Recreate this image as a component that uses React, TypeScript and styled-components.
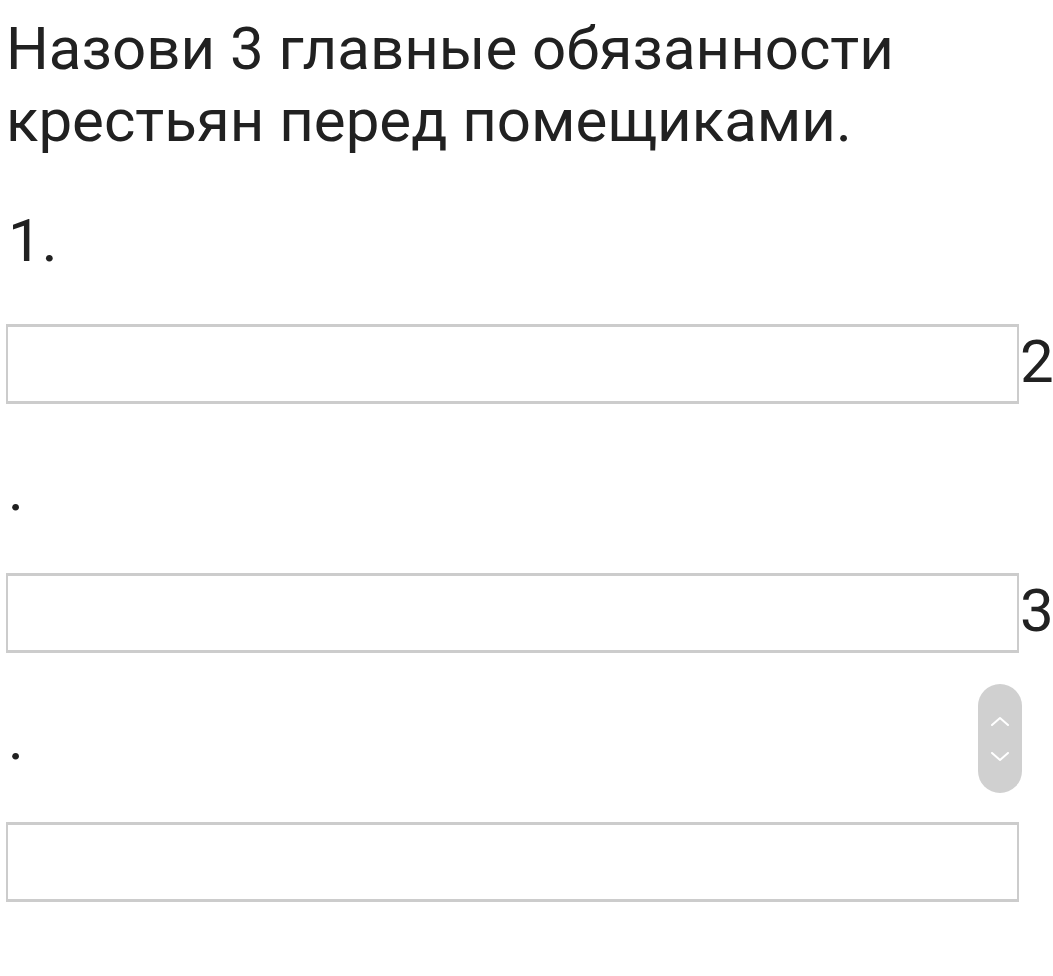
import styled, { createGlobalStyle } from 'styled-components';

const GlobalStyle = createGlobalStyle`
  html, body {
    margin: 0;
    padding: 0;
    background: #ffffff;
  }
  body {
    font-family: Roboto, "Noto Sans", "Liberation Sans", sans-serif;
    color: #212121;
  }
`;

const items = ['1.', '2', '3'];

const App = () => {
  return (
    <Page>
      <GlobalStyle />
      <Question>
        Назови 3 главные обязанности
        <br />
        крестьян перед помещиками.
      </Question>
      {items.map((num, i) => (
        <Item key={num}>
          <Label>{i === 0 ? '1.' : '.'}</Label>
          <AnswerRow>
            <AnswerInput type="text" />
            {i < items.length - 1 && <NextNumber>{items[i + 1]}</NextNumber>}
          </AnswerRow>
        </Item>
      ))}
      <ScrollButtons>
        <Chevron viewBox="0 0 20 10">
          <path d="M2 9 L10 2 L18 9" />
        </Chevron>
        <Chevron viewBox="0 0 20 10">
          <path d="M2 1 L10 8 L18 1" />
        </Chevron>
      </ScrollButtons>
    </Page>
  );
};

export default App;

const Page = styled.div`
  position: relative;
  width: 1053px;
  height: 976px;
  padding: 13px 0 0 6px;
  box-sizing: border-box;
  overflow: hidden;
`;

const Question = styled.div`
  font-size: 60px;
  line-height: 72px;
  margin-bottom: 48px;
`;

const Item = styled.div`
  display: flex;
  flex-direction: column;
  margin-bottom: 50px;
`;

const Label = styled.div`
  font-size: 60px;
  line-height: 72px;
  padding-left: 2px;
  margin-bottom: 47px;
`;

const AnswerRow = styled.div`
  display: flex;
  align-items: flex-start;
`;

const AnswerInput = styled.input`
  width: 1013px;
  height: 80px;
  box-sizing: border-box;
  border: 3px solid #cccccc;
  border-width: 3px 2px;
  border-radius: 0;
  background: #ffffff;
  padding: 0 12px;
  font-size: 32px;
  outline: none;
  flex-shrink: 0;
`;

const NextNumber = styled.span`
  font-size: 60px;
  line-height: 72px;
  margin-top: 2px;
  margin-left: 1px;
  white-space: nowrap;
`;

const ScrollButtons = styled.div`
  position: absolute;
  left: 978px;
  top: 684px;
  width: 44px;
  height: 109px;
  border-radius: 22px;
  background: #d0d0d0;
  display: flex;
  flex-direction: column;
  align-items: center;
  justify-content: center;
  gap: 26px;
`;

const Chevron = styled.svg`
  width: 20px;
  height: 10px;
  fill: none;
  stroke: #ffffff;
  stroke-width: 2;
  stroke-linecap: round;
  stroke-linejoin: round;
`;
